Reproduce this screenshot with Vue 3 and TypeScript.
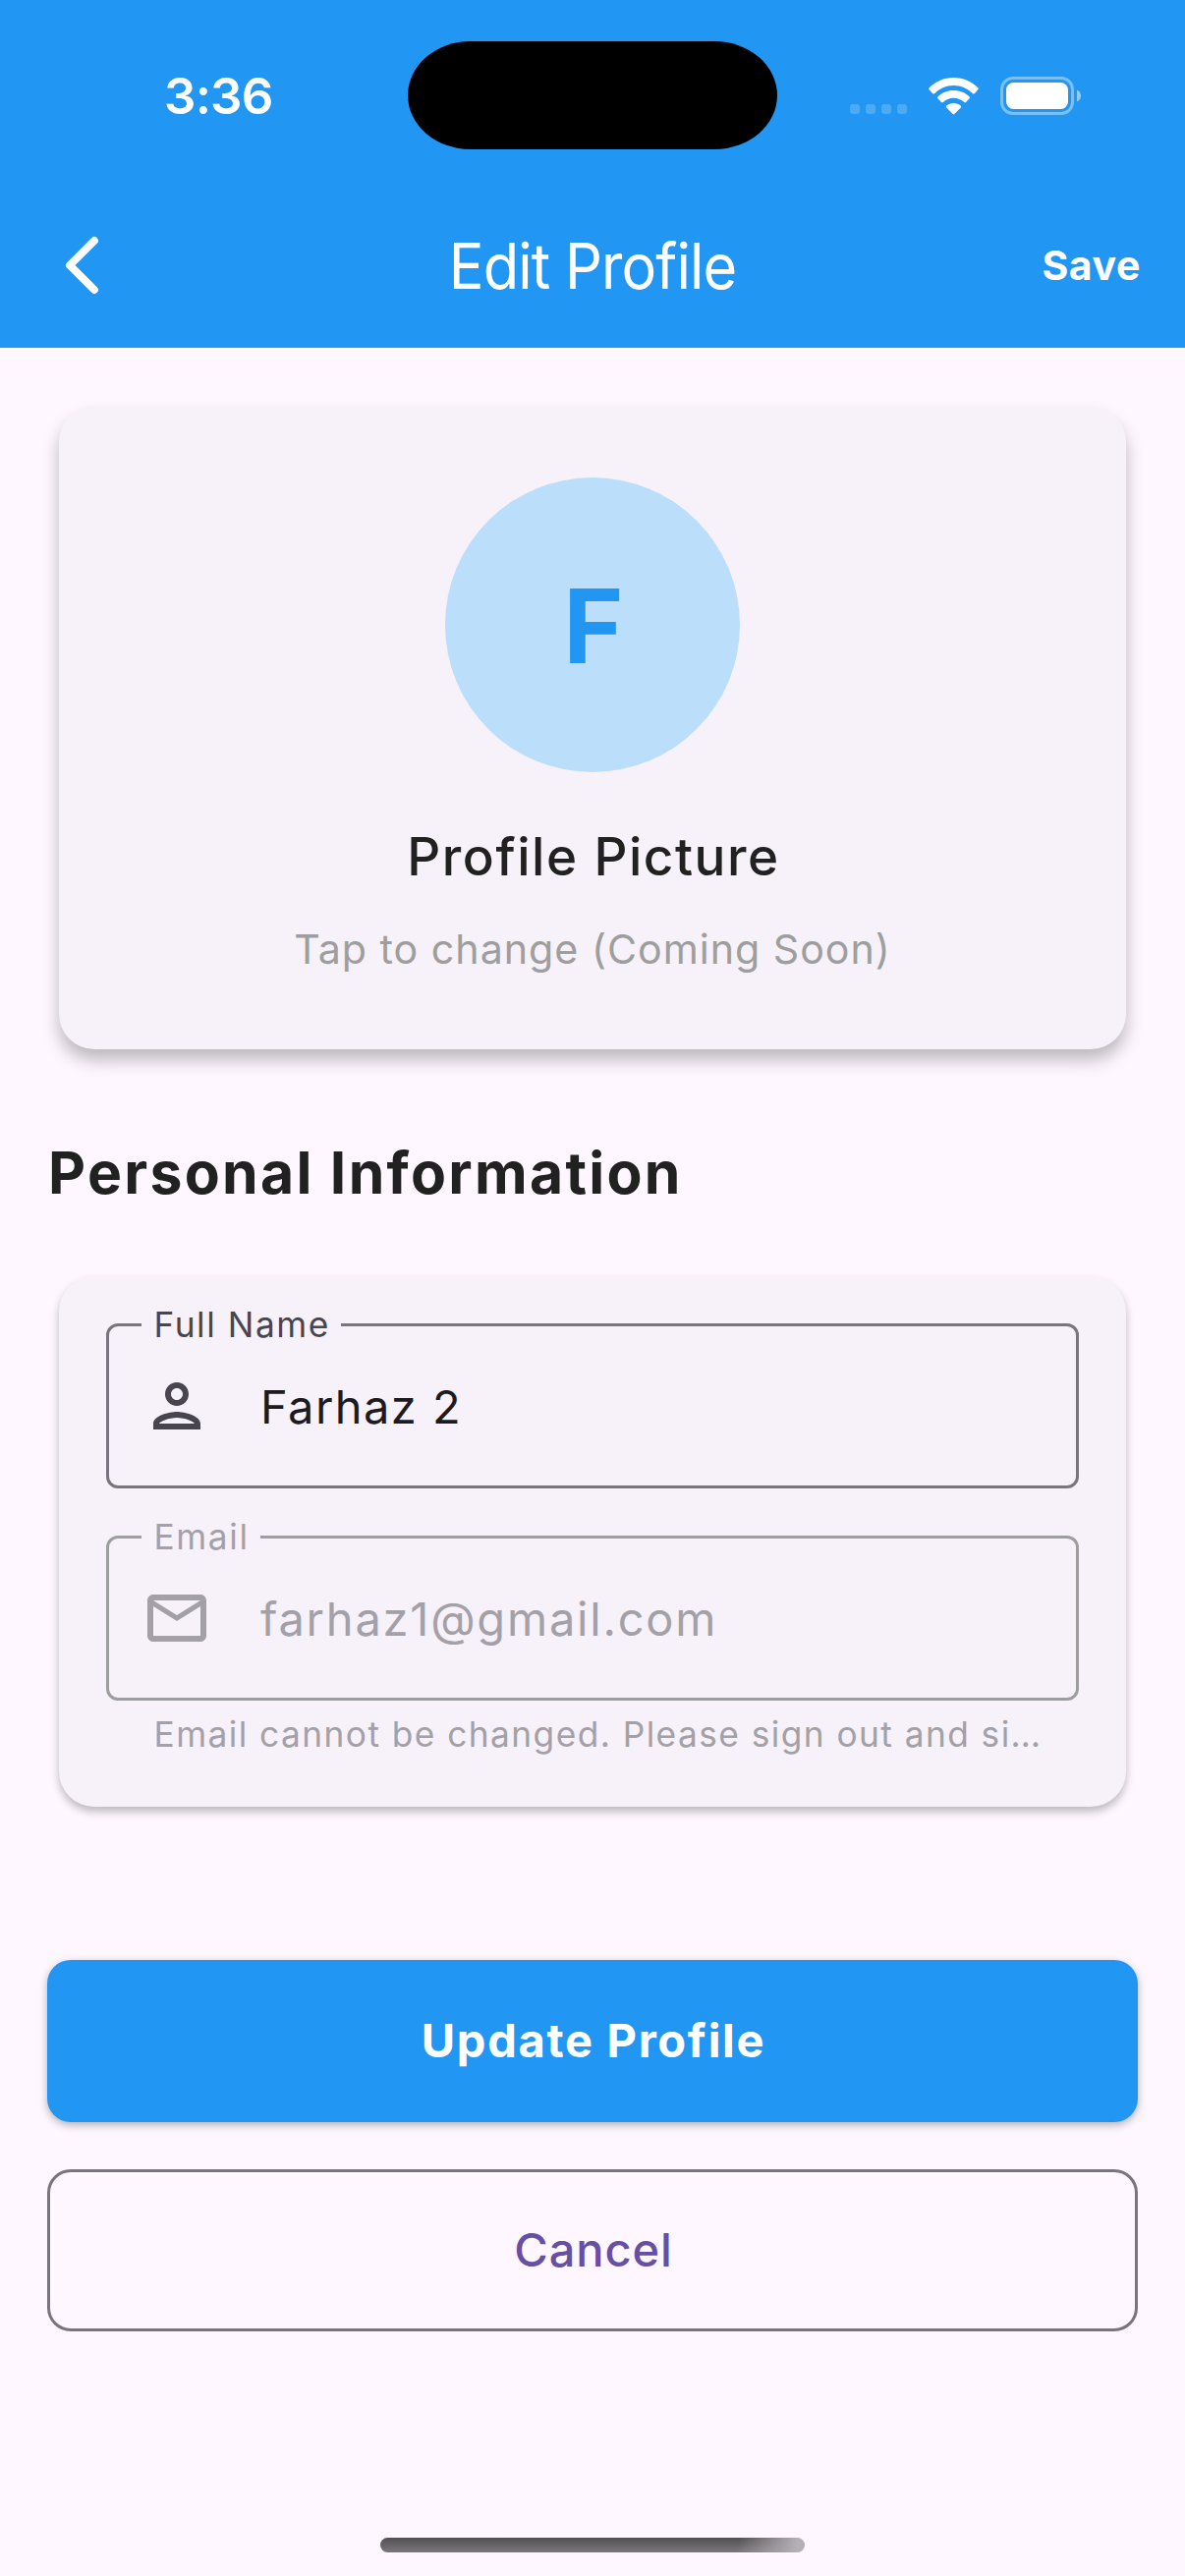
<script setup lang="ts">
import { ref } from 'vue'

interface Field {
  id: string
  label: string
  value: string
  icon: string
  disabled?: boolean
  helper?: string
}

const name = ref('Farhaz 2')

const fields: Field[] = [
  {
    id: 'name',
    label: 'Full Name',
    value: name.value,
    icon: 'M12 6c1.1 0 2 .9 2 2s-.9 2-2 2-2-.9-2-2 .9-2 2-2m0 10c2.700 0 5.800 1.290 6 2H6c.23-.72 3.310-2 6-2m0-12C9.790 4 8 5.790 8 8s1.790 4 4 4 4-1.790 4-4-1.790-4-4-4zm0 10c-2.670 0-8 1.340-8 4v2h16v-2c0-2.660-5.330-4-8-4z',
  },
  {
    id: 'email',
    label: 'Email',
    value: 'farhaz1@gmail.com',
    icon: 'M22 6c0-1.1-.9-2-2-2H4c-1.1 0-2 .9-2 2v12c0 1.1.9 2 2 2h16c1.1 0 2-.9 2-2V6zm-2 0l-8 5-8-5h16zm0 12H4V8l8 5 8-5v10z',
    disabled: true,
    helper: 'Email cannot be changed. Please sign out and si…',
  },
]
</script>

<template>
  <div class="screen">
    <header class="header">
      <div class="status">
        <span class="time">3:36</span>
        <span class="island" />
        <div class="indicators">
          <div class="dots"><i v-for="n in 4" :key="n" /></div>
          <svg class="wifi" viewBox="0 0 51 38" fill="#fff">
            <path d="M25.5 0C35.2 0 43.9 3.900 50.300 10.200Q51.200 11.200 50.300 12.200L46.800 16.200Q45.900 17 45 16.200C39.900 11.200 33.100 8 25.500 8S11.100 11.200 6 16.200Q5.100 17 4.200 16.200L.7 12.200Q-.2 11.200.7 10.200C7.100 3.900 15.800 0 25.500 0Z" />
            <path d="M25.500 13.100C31.800 13.100 37.400 15.500 41.600 19.400Q42.500 20.400 41.600 21.300L38 25Q37.100 25.800 36.200 25C33.400 22.300 29.600 20.700 25.500 20.700S17.600 22.300 14.800 25Q13.900 25.800 13 25L9.400 21.300Q8.500 20.400 9.400 19.400C13.600 15.500 19.200 13.100 25.500 13.100Z" />
            <path d="M25.500 26C28.300 26 30.800 27 32.800 28.600Q33.600 29.500 32.800 30.400L26.400 37Q25.500 37.900 24.600 37L18.200 30.400Q17.400 29.500 18.200 28.600C20.200 27 22.700 26 25.500 26Z" />
          </svg>
          <svg class="battery" viewBox="0 0 82 39">
            <rect x="1.5" y="1.5" width="72" height="36" rx="11.5" fill="none" stroke="#fff" stroke-opacity=".4" stroke-width="3" />
            <rect x="6" y="6" width="63" height="27" rx="7.5" fill="#fff" />
            <path d="M78 13.500c2.500 1 4 3.300 4 6s-1.500 5-4 6z" fill="#fff" fill-opacity=".5" />
          </svg>
        </div>
      </div>
      <div class="toolbar">
        <button class="back" aria-label="Back">
          <svg viewBox="0 0 40 64"><path d="M33 7L8 32l25 25" fill="none" stroke="#fff" stroke-width="7.8" stroke-linecap="round" stroke-linejoin="round" /></svg>
        </button>
        <h1>Edit Profile</h1>
        <button class="save">Save</button>
      </div>
    </header>

    <main>
      <section class="card photo">
        <div class="avatar"><span>F</span></div>
        <p class="photo-title">Profile Picture</p>
        <p class="photo-hint">Tap to change (Coming Soon)</p>
      </section>

      <h2>Personal Information</h2>

      <section class="card form">
        <div v-for="f in fields" :key="f.id" class="field" :class="{ disabled: f.disabled }">
          <div class="box">
            <span class="label">{{ f.label }}</span>
            <svg class="icon" viewBox="0 0 24 24"><path :d="f.icon" fill="currentColor" /></svg>
            <span class="value" :class="f.id">{{ f.value }}</span>
          </div>
          <p v-if="f.helper" class="helper">{{ f.helper }}</p>
        </div>
      </section>

      <div class="actions">
        <button class="update">Update Profile</button>
        <button class="cancel">Cancel</button>
      </div>
    </main>

    <div class="home" />
  </div>
</template>

<style>
body {
  background: #fef7ff;
}
</style>

<style scoped>
.screen {
  box-sizing: border-box;
  width: 1206px;
  height: 2622px;
  display: flex;
  flex-direction: column;
  overflow: hidden;
  background: #fef7ff;
  font-family: Inter, "Liberation Sans", sans-serif;
  color: #1d1b20;
}
h1, h2, p {
  margin: 0;
}
button {
  box-sizing: border-box;
  border: 0;
  padding: 0;
  background: none;
  font-family: inherit;
}
svg {
  display: block;
}
.header {
  flex: none;
  height: 354px;
  background: #2196f3;
  color: #fff;
}
.status {
  display: grid;
  grid-template-columns: 415px 376px 415px;
  height: 186px;
  padding-top: 42px;
  box-sizing: border-box;
}
.time {
  padding: 0 0 0 167px;
  font-size: 51px;
  font-weight: 600;
  letter-spacing: -0.8px;
  line-height: 112px;
}
.island {
  height: 110px;
  border-radius: 64px / 55px;
  background: #000;
}
.indicators {
  display: flex;
  align-items: flex-start;
  padding: 36px 0 0 74px;
}
.dots {
  display: flex;
  gap: 6px;
  margin-top: 28px;
}
.dots i {
  width: 10px;
  height: 10px;
  border-radius: 3px;
  background: rgba(255, 255, 255, 0.2);
}
.wifi {
  width: 51px;
  height: 38px;
  margin: 1px 0 0 22px;
}
.battery {
  width: 82px;
  height: 39px;
  margin-left: 22px;
}
.toolbar {
  display: grid;
  grid-template-columns: 300px 1fr 300px;
  align-items: center;
  height: 168px;
}
.back {
  width: 40px;
  height: 64px;
  margin-left: 63px;
}
.back svg {
  width: 40px;
  height: 64px;
}
h1 {
  padding-top: 2px;
  font-size: 64px;
  font-weight: 400;
  letter-spacing: -1px;
  line-height: 84px;
  text-align: center;
  white-space: nowrap;
  transform: scaleX(0.93);
}
.save {
  justify-self: end;
  padding-right: 45px;
  color: #fff;
  font-size: 41px;
  font-weight: 700;
  letter-spacing: 0.6px;
  line-height: 60px;
}
main {
  flex: 1;
  padding: 60px 48px 0;
}
.card {
  box-sizing: border-box;
  margin: 0 12px;
  border-radius: 36px;
  background: #f7f2fa;
}
.photo {
  display: flex;
  flex-direction: column;
  align-items: center;
  height: 654px;
  padding-top: 72px;
  box-shadow: 0 11px 17px rgba(0, 0, 0, 0.26);
}
.avatar {
  display: flex;
  align-items: center;
  justify-content: center;
  box-sizing: border-box;
  width: 300px;
  height: 300px;
  padding: 1px 0 0 2px;
  border-radius: 50%;
  background: #bbdefb;
  color: #2196f3;
  font-size: 104.5px;
  font-weight: 700;
  line-height: 120px;
}
.photo-title {
  margin-top: 47px;
  padding-left: 2px;
  color: #212121;
  font-size: 53px;
  font-weight: 500;
  letter-spacing: 1.55px;
  line-height: 78px;
}
.photo-hint {
  margin-top: 25px;
  color: #9e9e9e;
  font-size: 41.2px;
  letter-spacing: 0.98px;
  line-height: 60px;
}
h2 {
  margin: 81px 0 60px 1px;
  color: #212121;
  font-size: 58.8px;
  font-weight: 700;
  letter-spacing: 2.3px;
  line-height: 90px;
}
.form {
  display: flex;
  flex-direction: column;
  gap: 48px;
  height: 540px;
  padding: 48px 48px 0;
  box-shadow: 0 5px 9px rgba(0, 0, 0, 0.26);
}
.box {
  position: relative;
  display: flex;
  align-items: center;
  box-sizing: border-box;
  height: 168px;
  padding-left: 33px;
  border: 3px solid #79747e;
  border-radius: 12px;
}
.label {
  position: absolute;
  left: 33px;
  top: -25px;
  padding: 0 11px 0 12.5px;
  background: #f7f2fa;
  color: #49454f;
  font-size: 35.3px;
  letter-spacing: 1.55px;
  line-height: 48px;
  white-space: nowrap;
}
.icon {
  width: 72px;
  height: 72px;
  color: #49454f;
}
.value {
  font-size: 47px;
  line-height: 72px;
  margin: 1px 0 0 49px;
}
.value.name {
  letter-spacing: 1.45px;
}
.value.email {
  letter-spacing: 1.78px;
}
.disabled .box {
  border-color: #9e9e9e;
}
.disabled .label,
.disabled .icon,
.disabled .value,
.helper {
  color: #a4a0a7;
}
.disabled .label {
  letter-spacing: 1.6px;
}
.helper {
  padding: 11px 0 0 48.5px;
  font-size: 35.3px;
  letter-spacing: 1.43px;
  line-height: 48px;
  white-space: nowrap;
}
.actions {
  display: flex;
  flex-direction: column;
  gap: 48px;
  margin-top: 156px;
}
.actions button {
  height: 165px;
  padding: 0 0 2px 2px;
  border-radius: 24px;
  font-size: 47px;
}
.actions .update {
  background: #2196f3;
  box-shadow: 0 3px 8px rgba(0, 0, 0, 0.3);
  color: #fff;
  font-weight: 700;
  letter-spacing: 1.7px;
}
.actions .cancel {
  border: 3px solid #79747e;
  color: #6750a4;
  font-weight: 500;
  letter-spacing: 0.9px;
}
.home {
  flex: none;
  align-self: center;
  width: 432px;
  height: 15px;
  margin-bottom: 24px;
  border-radius: 8px;
  background:
    linear-gradient(100deg, rgba(181, 175, 182, 0) 84%, #b5afb6 98%),
    linear-gradient(#525052, #7b787c);
}
</style>
